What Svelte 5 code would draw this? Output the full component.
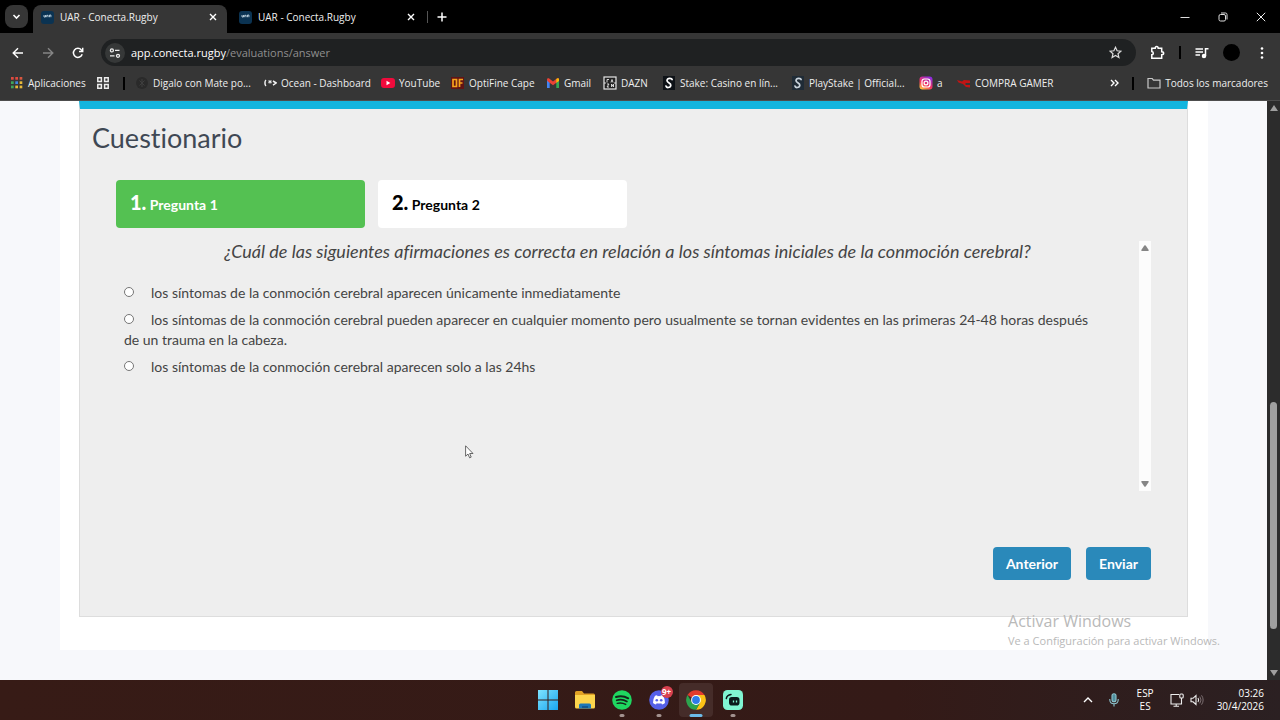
<script lang="ts">
  type Bookmark = { icon: string; label: string };

  const tabs = [
    { title: 'UAR - Conecta.Rugby', active: true },
    { title: 'UAR - Conecta.Rugby', active: false }
  ];

  const bookmarks: Bookmark[] = [
    { icon: 'mate', label: 'Digalo con Mate po...' },
    { icon: 'ocean', label: 'Ocean - Dashboard' },
    { icon: 'youtube', label: 'YouTube' },
    { icon: 'optifine', label: 'OptiFine Cape' },
    { icon: 'gmail', label: 'Gmail' },
    { icon: 'dazn', label: 'DAZN' },
    { icon: 'stake', label: 'Stake: Casino en lín...' },
    { icon: 'playstake', label: 'PlayStake | Official...' },
    { icon: 'instagram', label: 'a' },
    { icon: 'gamer', label: 'COMPRA GAMER' }
  ];

  const appColors = ['#e04a3f', '#e04a3f', '#d9573f', '#3fa65a', '#3f86e0', '#e8b93a', '#3fa65a', '#e8b93a', '#e8b93a'];

  const options = [
    'los síntomas de la conmoción cerebral aparecen únicamente inmediatamente',
    'los síntomas de la conmoción cerebral pueden aparecer en cualquier momento pero usualmente se tornan evidentes en las primeras 24-48 horas después de un trauma en la cabeza.',
    'los síntomas de la conmoción cerebral aparecen solo a las 24hs'
  ];

  let current = $state(1);
  let answer = $state('');
  let url = $state('app.conecta.rugby/evaluations/answer');

  const host = $derived(url.split('/')[0]);
  const path = $derived(url.slice(host.length));
</script>

{#snippet closeIcon()}
  <svg width="8" height="8" viewBox="0 0 8 8" fill="none" stroke="currentColor" stroke-width="1.4">
    <path d="M1 1l6 6M7 1L1 7" />
  </svg>
{/snippet}

{#snippet bookmarkIcon(name: string)}
  <svg class="icon" width="14" height="14" viewBox="0 0 14 14" aria-hidden="true">
    {#if name === 'mate'}
      <circle cx="7" cy="7" r="6" fill="#2a2a2a" />
      <path d="M4.500 4.500l5 5M9.500 4.500l-5 5M7 3v8" stroke="#3f3f3f" fill="none" />
    {:else if name === 'ocean'}
      <path d="M3 4C1.600 5 1.600 9 3 10M10 5l3.200 2L10 9.200" stroke="#f2f2f2" stroke-width="1.500" fill="none" />
      <path d="M7 4v3.600M5.300 4.900l3.400 1.900M8.700 4.900L5.300 6.800" stroke="#f2f2f2" fill="none" />
    {:else if name === 'youtube'}
      <rect x="0" y="2" width="14" height="10" rx="3" fill="#f00b3c" />
      <path d="M5.500 4.800v4.400L9.300 7z" fill="#fff" />
    {:else if name === 'optifine'}
      <rect x="0" y="1" width="13" height="12" fill="#611414" />
      <path d="M2 3.500h3.500v7H2zM8.500 11V3.500H12M8.500 7H11.500" fill="none" stroke="#f7a31c" stroke-width="1.700" />
    {:else if name === 'gmail'}
      <path d="M1 3.500V12h2.700V6z" fill="#4285f4" />
      <path d="M10.300 6v6H13V3.500z" fill="#34a853" />
      <path d="M1 3.600C1 2.200 2.400 1.800 3.500 2.700L7 5.400l3.500-2.700C11.600 1.800 13 2.200 13 3.600L12.700 5 7 9.200 1.300 5z" fill="#ea4335" />
      <path d="M10.300 3v3.800L13 4.900V3.600C13 2 11.500 1.900 10.300 3z" fill="#fbbc04" />
    {:else if name === 'dazn'}
      <rect x="1" y="1" width="12" height="12" fill="#222" stroke="#e6e6e6" stroke-width="1.200" />
      <path d="M4 3.500v3M6 3.500h-2M8 6.500l1-3 1 3M4 8h2l-2 3h2M8.500 11V8l2 3V8M1 7h2M11 7h2" fill="none" stroke="#e6e6e6" stroke-width=".9" />
    {:else if name === 'stake' || name === 'playstake'}
      <rect x="1" y="0" width="12" height="14" fill={name === 'stake' ? '#0e1217' : '#1f2b36'} />
      <path
        d="M10.200 4.200C10.300 1.700 5.300 1.600 5 4.500 4.900 6.800 9 6.600 8.800 9.300 8.600 12.200 3.600 12.300 4 9.400"
        fill="none"
        stroke={name === 'stake' ? '#fff' : '#c9d3dc'}
        stroke-width="1.700"
      />
    {:else if name === 'instagram'}
      <defs>
        <linearGradient id="insta" x1="0.200" y1="1" x2="0.800" y2="0">
          <stop offset="0" stop-color="#ffc63d" />
          <stop offset="0.400" stop-color="#f5335f" />
          <stop offset="1" stop-color="#8a2be8" />
        </linearGradient>
      </defs>
      <rect x="0.500" y="0.500" width="13" height="13" rx="3" fill="url(#insta)" />
      <rect x="3" y="3" width="8" height="8" rx="2.300" fill="none" stroke="#fff" stroke-width="1.200" />
      <circle cx="7" cy="7" r="1.900" fill="none" stroke="#fff" stroke-width="1.200" />
    {:else}
      <path d="M0 4l5 1.500 2-1.500 6 .5V7H8.500v2H13v2.500L9 11 6 8 1.500 6.500z" fill="#c11414" />
    {/if}
  </svg>
{/snippet}

<div class="screen">
  <header class="browser">
    <div class="tab-strip">
      <button class="tab-search" aria-label="Buscar pestañas">
        <svg width="9" height="9" viewBox="0 0 9 9" fill="none" stroke="#fff" stroke-width="1.600"><path d="M1.500 3l3 3 3-3" /></svg>
      </button>
      {#each tabs as tab}
        <div class="tab" class:active={tab.active}>
          <svg class="favicon" width="13" height="13" viewBox="0 0 13 13" aria-hidden="true">
            <rect width="13" height="13" rx="3" fill="#0b3352" />
            <path d="M3 4v2h1.500V4M5.700 6.200V4.300h1.400v1.900M8.500 6.200V4h1.400v2.200" fill="none" stroke="#d8e8f2" stroke-width=".8" />
          </svg>
          <span class="tab-title">{tab.title}</span>
          <button class="plain" aria-label="Cerrar pestaña">{@render closeIcon()}</button>
        </div>
      {/each}
      <span class="tab-divider"></span>
      <button class="plain new-tab" aria-label="Nueva pestaña">
        <svg width="10" height="10" viewBox="0 0 10 10" stroke="#fff" stroke-width="1.500"><path d="M5 .5v9M.5 5h9" /></svg>
      </button>
      <div class="window-controls">
        <button class="plain" aria-label="Minimizar">
          <svg width="10" height="10" viewBox="0 0 10 10" stroke="#ddd"><path d="M.5 5.500h9" /></svg>
        </button>
        <button class="plain" aria-label="Restaurar">
          <svg width="10" height="10" viewBox="0 0 10 10" stroke="#ddd" fill="none">
            <rect x="1" y="2.500" width="6.500" height="6.500" rx="1.500" /><path d="M3 1h4.500Q9 1 9 2.500V7.500" />
          </svg>
        </button>
        <button class="plain" aria-label="Cerrar">
          <svg width="10" height="10" viewBox="0 0 10 10" stroke="#eee"><path d="M.8.8l8.400 8.400M9.200.8L.8 9.200" /></svg>
        </button>
      </div>
    </div>

    <div class="toolbar">
      <button class="plain" aria-label="Atrás">
        <svg width="12" height="12" viewBox="0 0 12 12" fill="none" stroke="#fff" stroke-width="1.400"><path d="M11 6H1.500M6 1.200L1.200 6 6 10.800" /></svg>
      </button>
      <button class="plain" aria-label="Adelante">
        <svg width="12" height="12" viewBox="0 0 12 12" fill="none" stroke="#858585" stroke-width="1.400"><path d="M1 6h9.500M6 1.200L10.800 6 6 10.800" /></svg>
      </button>
      <button class="plain" aria-label="Recargar">
        <svg width="12" height="12" viewBox="0 0 12 12" fill="none" stroke="#fff" stroke-width="1.500">
          <path d="M10.200 7.300A4.500 4.500 0 1 1 9.400 3L10.300 4" /><path d="M10.700.8v3.700H7" />
        </svg>
      </button>
      <div class="address">
        <span class="site-info">
          <svg width="12" height="12" viewBox="0 0 12 12" fill="none" stroke="#eee" stroke-width="1.300">
            <circle cx="2.900" cy="3.400" r="1.500" /><path d="M6 3.400h4.500M1 8.800h4.500" /><circle cx="9" cy="8.800" r="1.500" />
          </svg>
        </span>
        <a class="url" href="#respuesta">{host}<span>{path}</span></a>
        <button class="plain" aria-label="Añadir a marcadores">
          <svg width="13" height="13" viewBox="0 0 13 13" fill="none" stroke="#ddd" stroke-width="1.200">
            <path d="M6.500 1.300l1.600 3.500 3.800.4-2.900 2.500.9 3.800-3.400-2-3.400 2 .9-3.800L1.100 5.200l3.800-.4z" />
          </svg>
        </button>
      </div>
      <div class="tools">
        <button class="plain" aria-label="Extensiones">
          <svg width="15" height="15" viewBox="0 0 15 15" fill="none" stroke="#fff" stroke-width="1.500">
            <path d="M1.800 3.300h3.400c0-2.500 3-2.500 3 0h3.500v3.400c2.600 0 2.600 3 0 3v3.500H1.800V9.800c2-.2 2-3 0-3.200z" />
          </svg>
        </button>
        <span class="bar"></span>
        <button class="plain" aria-label="Controlar multimedia">
          <svg width="14" height="12" viewBox="0 0 14 12" fill="none" stroke="#fff" stroke-width="1.500">
            <path d="M.5 2h7.500M.5 5h7.500M.5 8h4.500M10.500 9V1.800h3" /><circle cx="9" cy="9" r="1.500" fill="#fff" />
          </svg>
        </button>
        <button class="plain avatar" aria-label="Perfil"></button>
        <button class="plain menu" aria-label="Menú">
          <svg width="4" height="14" viewBox="0 0 4 14" fill="#fff"><circle cx="2" cy="2.500" r="1.300" /><circle cx="2" cy="7" r="1.300" /><circle cx="2" cy="11.500" r="1.300" /></svg>
        </button>
      </div>
    </div>

    <nav class="bookmarks">
      <a href="#apps">
        <svg class="icon" width="14" height="14" viewBox="0 0 14 14" aria-hidden="true">
          {#each appColors as color, i}
            <rect x={1 + (i % 3) * 4.3} y={1 + Math.floor(i / 3) * 4.3} width="2.700" height="2.700" fill={color} />
          {/each}
        </svg>
        Aplicaciones
      </a>
      <button class="plain group" aria-label="Grupos de pestañas">
        <svg width="14" height="14" viewBox="0 0 14 14" fill="none" stroke="#eee" stroke-width="1.500">
          <path d="M1.800 1.800h3.600v3.600H1.800zM8.600 1.800h3.600v3.600H8.600zM1.800 8.600h3.600v3.600H1.800zM8.600 8.600h3.600v3.600H8.600z" />
        </svg>
      </button>
      <span class="bar"></span>
      {#each bookmarks as mark}
        <a href="#{mark.icon}">{@render bookmarkIcon(mark.icon)}{mark.label}</a>
      {/each}
      <div class="all-marks">
        <button class="plain" aria-label="Más marcadores">
          <svg width="9" height="8" viewBox="0 0 9 8" fill="none" stroke="#fff" stroke-width="1.400"><path d="M1 1l3 3-3 3M5 1l3 3-3 3" /></svg>
        </button>
        <span class="bar"></span>
        <a href="#todos">
          <svg class="icon" width="14" height="12" viewBox="0 0 14 12" fill="none" stroke="#c8c8c8" stroke-width="1.200" aria-hidden="true">
            <path d="M1 1.500h4.200l1.300 1.600H13V11H1z" />
          </svg>
          Todos los marcadores
        </a>
      </div>
    </nav>
  </header>

  <div class="viewport">
    <main>
      <div class="sheet">
        <section class="panel">
          <h1>Cuestionario</h1>
          <div class="questions">
            {#each [1, 2] as n}
              <button class="question" class:current={current === n} onclick={() => (current = n)}>
                <b>{n}.</b> Pregunta {n}
              </button>
            {/each}
          </div>
          <div class="quiz">
            <fieldset>
              <legend>¿Cuál de las siguientes afirmaciones es correcta en relación a los síntomas iniciales de la conmoción cerebral?</legend>
              {#each options as option}
                <label><input type="radio" name="answer" value={option} bind:group={answer} />{option}</label>
              {/each}
            </fieldset>
            <div class="track">
              <svg width="8" height="6" viewBox="0 0 8 6"><path d="M3.300.6L.3 5Q0 6 1 6H7Q8 6 7.700 5L4.700.6Q4 0 3.300.6z" fill="#858585" /></svg>
              <svg width="8" height="6" viewBox="0 0 8 6"><path d="M3.300 5.400L.3 1Q0 0 1 0H7Q8 0 7.700 1L4.700 5.400Q4 6 3.300 5.400z" fill="#858585" /></svg>
            </div>
          </div>
          <div class="actions">
            <button>Anterior</button>
            <button>Enviar</button>
          </div>
        </section>
      </div>
    </main>
    <div class="page-scroll">
      <svg width="8" height="6" viewBox="0 0 8 6"><path d="M4 0L8 6H0z" fill="#9f9f9f" /></svg>
      <span class="thumb"></span>
      <svg width="8" height="6" viewBox="0 0 8 6"><path d="M4 6L8 0H0z" fill="#9f9f9f" /></svg>
    </div>
    <div class="watermark">
      <p class="big">Activar Windows</p>
      <p>Ve a Configuración para activar Windows.</p>
    </div>
    <svg class="pointer" width="9" height="14" viewBox="0 0 9 14">
      <path d="M.6.800V11.200L3 9l1.600 3.800 1.600-.7L4.700 8.500H8z" fill="#fff" stroke="#444" stroke-width=".8" />
    </svg>
  </div>

  <footer class="taskbar">
    <div class="apps">
      <button class="app" aria-label="Inicio">
        <svg width="20" height="20" viewBox="0 0 20 20">
          <defs>
            <linearGradient id="win" x1="0" y1="0" x2="1" y2="1"><stop offset="0" stop-color="#7fe3ff" /><stop offset="1" stop-color="#18a5ee" /></linearGradient>
          </defs>
          <path d="M0 0h9.500v9.500H0zM10.500 0H20v9.500h-9.500zM0 10.500h9.500V20H0zM10.500 10.500H20V20h-9.500z" fill="url(#win)" />
        </svg>
      </button>
      <button class="app" aria-label="Explorador de archivos">
        <svg width="20" height="20" viewBox="0 0 20 20">
          <path d="M0 2.500Q0 1 1.500 1H7l2 2.500H18.500Q20 3.500 20 5v6H0z" fill="#e0a125" />
          <path d="M0 5h20v12q0 1.500-1.500 1.500h-17Q0 18.500 0 17z" fill="#fbd44c" />
          <path d="M4 18.500V15q0-1.500 1.500-1.500h9Q16 13.500 16 15v3.500z" fill="#1c77b8" />
          <path d="M7 17h6" stroke="#0f4f85" stroke-width="1.500" />
        </svg>
      </button>
      <button class="app" aria-label="Spotify">
        <svg width="20" height="20" viewBox="0 0 20 20" fill="none" stroke="#14251a" stroke-linecap="round">
          <circle cx="10" cy="10" r="9.800" fill="#1fd760" stroke="none" />
          <path d="M4 7q6.500-2 12.200 1.300" stroke-width="2" /><path d="M4.700 10.300q5.500-1.600 10.200 1.200" stroke-width="1.700" /><path d="M5.200 13.400q4.500-1.300 8.500 1" stroke-width="1.400" />
        </svg>
        <span class="dot"></span>
      </button>
      <button class="app" aria-label="Discord">
        <svg width="20" height="20" viewBox="0 0 20 20">
          <circle cx="10" cy="10" r="9.800" fill="#5560e8" />
          <path d="M6 5.800l2-.6.7 1q1.300-.2 2.600 0l.7-1 2 .6q2 3 2 7.200-1.500 1.300-3 1.500l-.7-1.300q-2.300.5-4.600 0L7 14.500Q5.500 14.300 4 13 4 8.800 6 5.800z" fill="#fff" />
          <circle cx="7.800" cy="10.200" r="1.300" fill="#5560e8" /><circle cx="12.200" cy="10.200" r="1.300" fill="#5560e8" />
        </svg>
        <span class="badge">9+</span>
        <span class="dot"></span>
      </button>
      <button class="app focused" aria-label="Google Chrome">
        <svg width="20" height="20" viewBox="0 0 20 20">
          <path d="M10 10L1.500 5.100A9.800 9.800 0 0 1 18.500 5.100z" fill="#e33b2e" />
          <path d="M10 5.100h8.500A9.800 9.800 0 0 1 10 19.800L14.200 12.400z" fill="#fbc116" />
          <path d="M1.500 5.100A9.800 9.800 0 0 0 10 19.800L14.200 12.400 5.800 12.400z" fill="#2da44e" />
          <circle cx="10" cy="10" r="4.900" fill="#fff" /><circle cx="10" cy="10" r="3.900" fill="#2f7bea" />
        </svg>
        <span class="dot wide"></span>
      </button>
      <button class="app" aria-label="Streamlabs">
        <svg width="20" height="20" viewBox="0 0 20 20">
          <rect width="20" height="20" rx="4.500" fill="#80f5d2" />
          <rect x="6" y="7" width="10.500" height="8.500" rx="2.800" fill="#0b1a1c" />
          <path d="M3.300 8.500Q4 5 8 4.500" fill="none" stroke="#0b1a1c" stroke-width="1.500" stroke-linecap="round" />
          <path d="M10.500 10.500v2M13.500 10.500v2" stroke="#80f5d2" stroke-width="1.300" />
        </svg>
        <span class="dot"></span>
      </button>
    </div>
    <div class="tray">
      <button class="plain" aria-label="Mostrar iconos ocultos">
        <svg width="10" height="6" viewBox="0 0 10 6" fill="none" stroke="#fff" stroke-width="1.400"><path d="M1 5l4-4 4 4" /></svg>
      </button>
      <svg width="10" height="14" viewBox="0 0 10 14" fill="none" stroke="#8ec5cf" stroke-width="1.100">
        <rect x="3" y=".8" width="4" height="8" rx="2" fill="#4f8f9d" /><path d="M.8 6v1Q1 10.700 5 10.800 9 10.700 9.200 7V6M5 11v2.500" />
      </svg>
      <div class="language">ESP<br />ES</div>
      <div class="status">
        <svg width="14" height="14" viewBox="0 0 14 14" fill="none" stroke="#eee" stroke-width="1.100">
          <path d="M9 1.500H1v9.500h10.500V7M3.500 13.300H9M6.200 11v2.300M11.500 5v2" /><rect x="9.800" y="1" width="3.400" height="4" rx="1" />
        </svg>
        <svg width="14" height="12" viewBox="0 0 14 12" fill="none" stroke="#eee" stroke-width="1.100">
          <path d="M1 4.300h2L6 1.500v9L3 7.800H1z" /><path d="M8 4q1.300 2 0 4" /><path d="M9.800 2.600q2.400 3.400 0 6.800M11.500 1.300q3.300 4.700 0 9.400" stroke="#85787a" stroke-width=".9" />
        </svg>
      </div>
      <time>03:26<br />30/4/2026</time>
    </div>
  </footer>
</div>

<style>
  :global(body) {
    margin: 0;
    background: #f7f8fb;
  }

  .screen {
    --ui: 'Open Sans', 'Noto Sans', sans-serif;
    min-height: 100vh;
    display: flex;
    flex-direction: column;
    font-family: var(--ui);
    font-size: 10px;
    color: #eee;
  }

  button {
    font: inherit;
    border: 0;
    cursor: pointer;
  }

  svg {
    display: block;
    flex: none;
  }

  a {
    color: inherit;
    text-decoration: none;
  }

  .plain {
    display: grid;
    place-items: center;
    padding: 0;
    background: none;
    color: #fff;
  }

  /* navegador */
  .browser {
    background: #363636;
    border-bottom: 1px solid #4d4d4d;
  }

  .tab-strip {
    display: flex;
    align-items: center;
    height: 33px;
    padding-left: 5px;
    background: #000;
  }

  .tab-search {
    display: grid;
    place-items: center;
    width: 23px;
    height: 23px;
    margin-right: 5px;
    padding: 0;
    border-radius: 8px;
    background: #363636;
  }

  .tab {
    display: flex;
    align-items: center;
    box-sizing: border-box;
    width: 194px;
    height: 28px;
    align-self: flex-end;
    padding: 0 10px 4px 8px;
    border-radius: 8px 8px 0 0;
  }

  .tab.active {
    background: #363636;
  }

  .tab + .tab {
    width: 198px;
    padding-left: 12px;
  }

  .tab-title {
    flex: 1;
    margin-left: 6px;
  }

  .tab-divider {
    width: 1px;
    height: 12px;
    margin: 0 9px 0 2px;
    background: #555;
  }

  .window-controls {
    display: flex;
    gap: 28px;
    margin-left: auto;
    padding-right: 14px;
  }

  .toolbar {
    display: flex;
    align-items: center;
    gap: 18px;
    height: 39px;
    padding: 0 16px 0 12px;
  }

  .address {
    flex: 1;
    display: flex;
    align-items: center;
    height: 27px;
    margin: 0 -4px 0 -1px;
    padding: 0 14px 0 4px;
    border-radius: 14px;
    background: #1f2122;
  }

  .site-info {
    display: grid;
    place-items: center;
    width: 20px;
    height: 20px;
    margin-right: 6px;
    border-radius: 50%;
    background: #363838;
  }

  .url {
    flex: 1;
    font-size: 11px;
    color: #fff;
  }

  .url span {
    color: #8f8f8f;
  }

  .tools {
    display: flex;
    align-items: center;
    gap: 14px;
  }

  .bar {
    width: 2px;
    height: 13px;
    background: #000;
  }

  .avatar {
    width: 17px;
    height: 17px;
    border-radius: 50%;
    background: #000;
  }

  .menu {
    margin-left: 6px;
  }

  .bookmarks {
    display: grid;
    grid-template-columns: 86px 27px 12px 128px 118px 70px 95px 57px 59px 129px 128px 38px auto 1fr;
    align-items: center;
    height: 22px;
    padding: 0 12px 6px 10px;
    white-space: nowrap;
  }

  .bookmarks a {
    display: flex;
    align-items: center;
    gap: 4px;
  }

  .group {
    justify-self: start;
  }

  .all-marks {
    display: flex;
    align-items: center;
    justify-content: flex-end;
    gap: 13px;
  }

  /* página */
  .viewport {
    position: relative;
    flex: 1;
    display: flex;
    color: #444;
  }

  main {
    flex: 1;
    padding: 0 59px 29px 60px;
    background: #f7f8fb;
  }

  .sheet {
    padding: 0 20px 33px 19px;
    background: #fff;
  }

  .panel {
    padding: 0 36px 36px;
    background: #eee;
    border: 1px solid #ddd;
    border-top: 8px solid #12b5df;
    font-family: Lato, 'Open Sans', sans-serif;
    font-size: 14px;
    font-variant-ligatures: none;
  }

  h1 {
    margin: 0 0 24px -24px;
    padding-top: 11px;
    font-size: 27px;
    line-height: 36px;
    font-weight: 400;
    color: #3f4854;
  }

  .questions {
    display: flex;
    gap: 13px;
  }

  .question {
    width: 249px;
    height: 48px;
    padding: 0 14px 4px;
    border-radius: 4px;
    background: #fff;
    color: #000;
    font-weight: 700;
    text-align: left;
  }

  .question b {
    font-size: 20px;
  }

  .question.current {
    background: #54c152;
    color: #fff;
  }

  .quiz {
    display: flex;
    height: 250px;
    margin-top: 13px;
  }

  fieldset {
    flex: 1;
    min-width: 0;
    margin: 0;
    padding: 0 40px 0 8px;
    border: 0;
  }

  legend {
    box-sizing: border-box;
    width: calc(100% + 40px);
    margin-bottom: 22px;
    padding: 0 8px 0 0;
    font-size: 18px;
    line-height: 20px;
    font-style: italic;
    text-align: center;
    white-space: nowrap;
  }

  label {
    display: block;
    margin-bottom: 7px;
    line-height: 20px;
  }

  input[type='radio'] {
    appearance: none;
    width: 10px;
    height: 10px;
    margin: 0 17px 0 0;
    border: 1px solid #767676;
    border-radius: 50%;
    background: #fff;
    vertical-align: 1px;
  }

  input[type='radio']:checked {
    background: radial-gradient(#2a89ba 45%, #fff 50%);
  }

  .track {
    display: flex;
    flex-direction: column;
    justify-content: space-between;
    align-items: center;
    width: 12px;
    padding: 4px 0;
    box-sizing: border-box;
    background: #fcfcfc;
  }

  .actions {
    display: flex;
    justify-content: flex-end;
    gap: 15px;
    margin-top: 56px;
  }

  .actions button {
    height: 33px;
    padding: 0 13px;
    border-radius: 4px;
    background: #2a89ba;
    color: #fff;
    font-weight: 700;
  }

  .page-scroll {
    display: flex;
    flex-direction: column;
    align-items: center;
    width: 13px;
    padding: 4px 0;
    box-sizing: border-box;
    background: #2c2c2c;
  }

  .thumb {
    width: 7px;
    height: 227px;
    margin: auto 0 41px;
    border-radius: 4px;
    background: #9f9f9f;
  }

  .watermark {
    position: absolute;
    right: 60px;
    bottom: 30px;
    color: #b9b9b9;
    font-size: 11px;
    line-height: 18px;
  }

  .watermark p {
    margin: 0;
  }

  .watermark .big {
    font-size: 16px;
    line-height: 22px;
  }

  .pointer {
    position: absolute;
    left: 465px;
    top: 344px;
  }

  /* barra de tareas */
  .taskbar {
    display: grid;
    grid-template-columns: 1fr auto 1fr;
    align-items: center;
    height: 40px;
    background: linear-gradient(90deg, #371b16, #341a17 70%, #2b2022);
  }

  .apps {
    grid-column: 2;
    display: flex;
    gap: 3px;
  }

  .app {
    position: relative;
    display: grid;
    place-items: center;
    width: 34px;
    height: 34px;
    padding: 0;
    border-radius: 4px;
    background: none;
  }

  .app.focused {
    background: #452c29;
  }

  .dot {
    position: absolute;
    left: 50%;
    bottom: 0;
    width: 5px;
    height: 3px;
    border-radius: 2px;
    background: #a3928f;
    transform: translateX(-50%);
  }

  .dot.wide {
    width: 13px;
    background: #6cbcea;
  }

  .badge {
    position: absolute;
    top: 3px;
    right: 3px;
    width: 12px;
    border-radius: 6px;
    background: #d8414f;
    color: #fff;
    font-size: 8px;
    font-weight: 700;
    line-height: 12px;
    text-align: center;
  }

  .tray {
    display: flex;
    align-items: center;
    justify-content: flex-end;
    gap: 16px;
    padding-right: 16px;
    line-height: 13px;
    color: #fff;
  }

  .language {
    padding-left: 2px;
    text-align: center;
  }

  .status {
    display: flex;
    align-items: center;
    gap: 6px;
    margin-right: -3px;
  }

  time {
    text-align: right;
  }
</style>
